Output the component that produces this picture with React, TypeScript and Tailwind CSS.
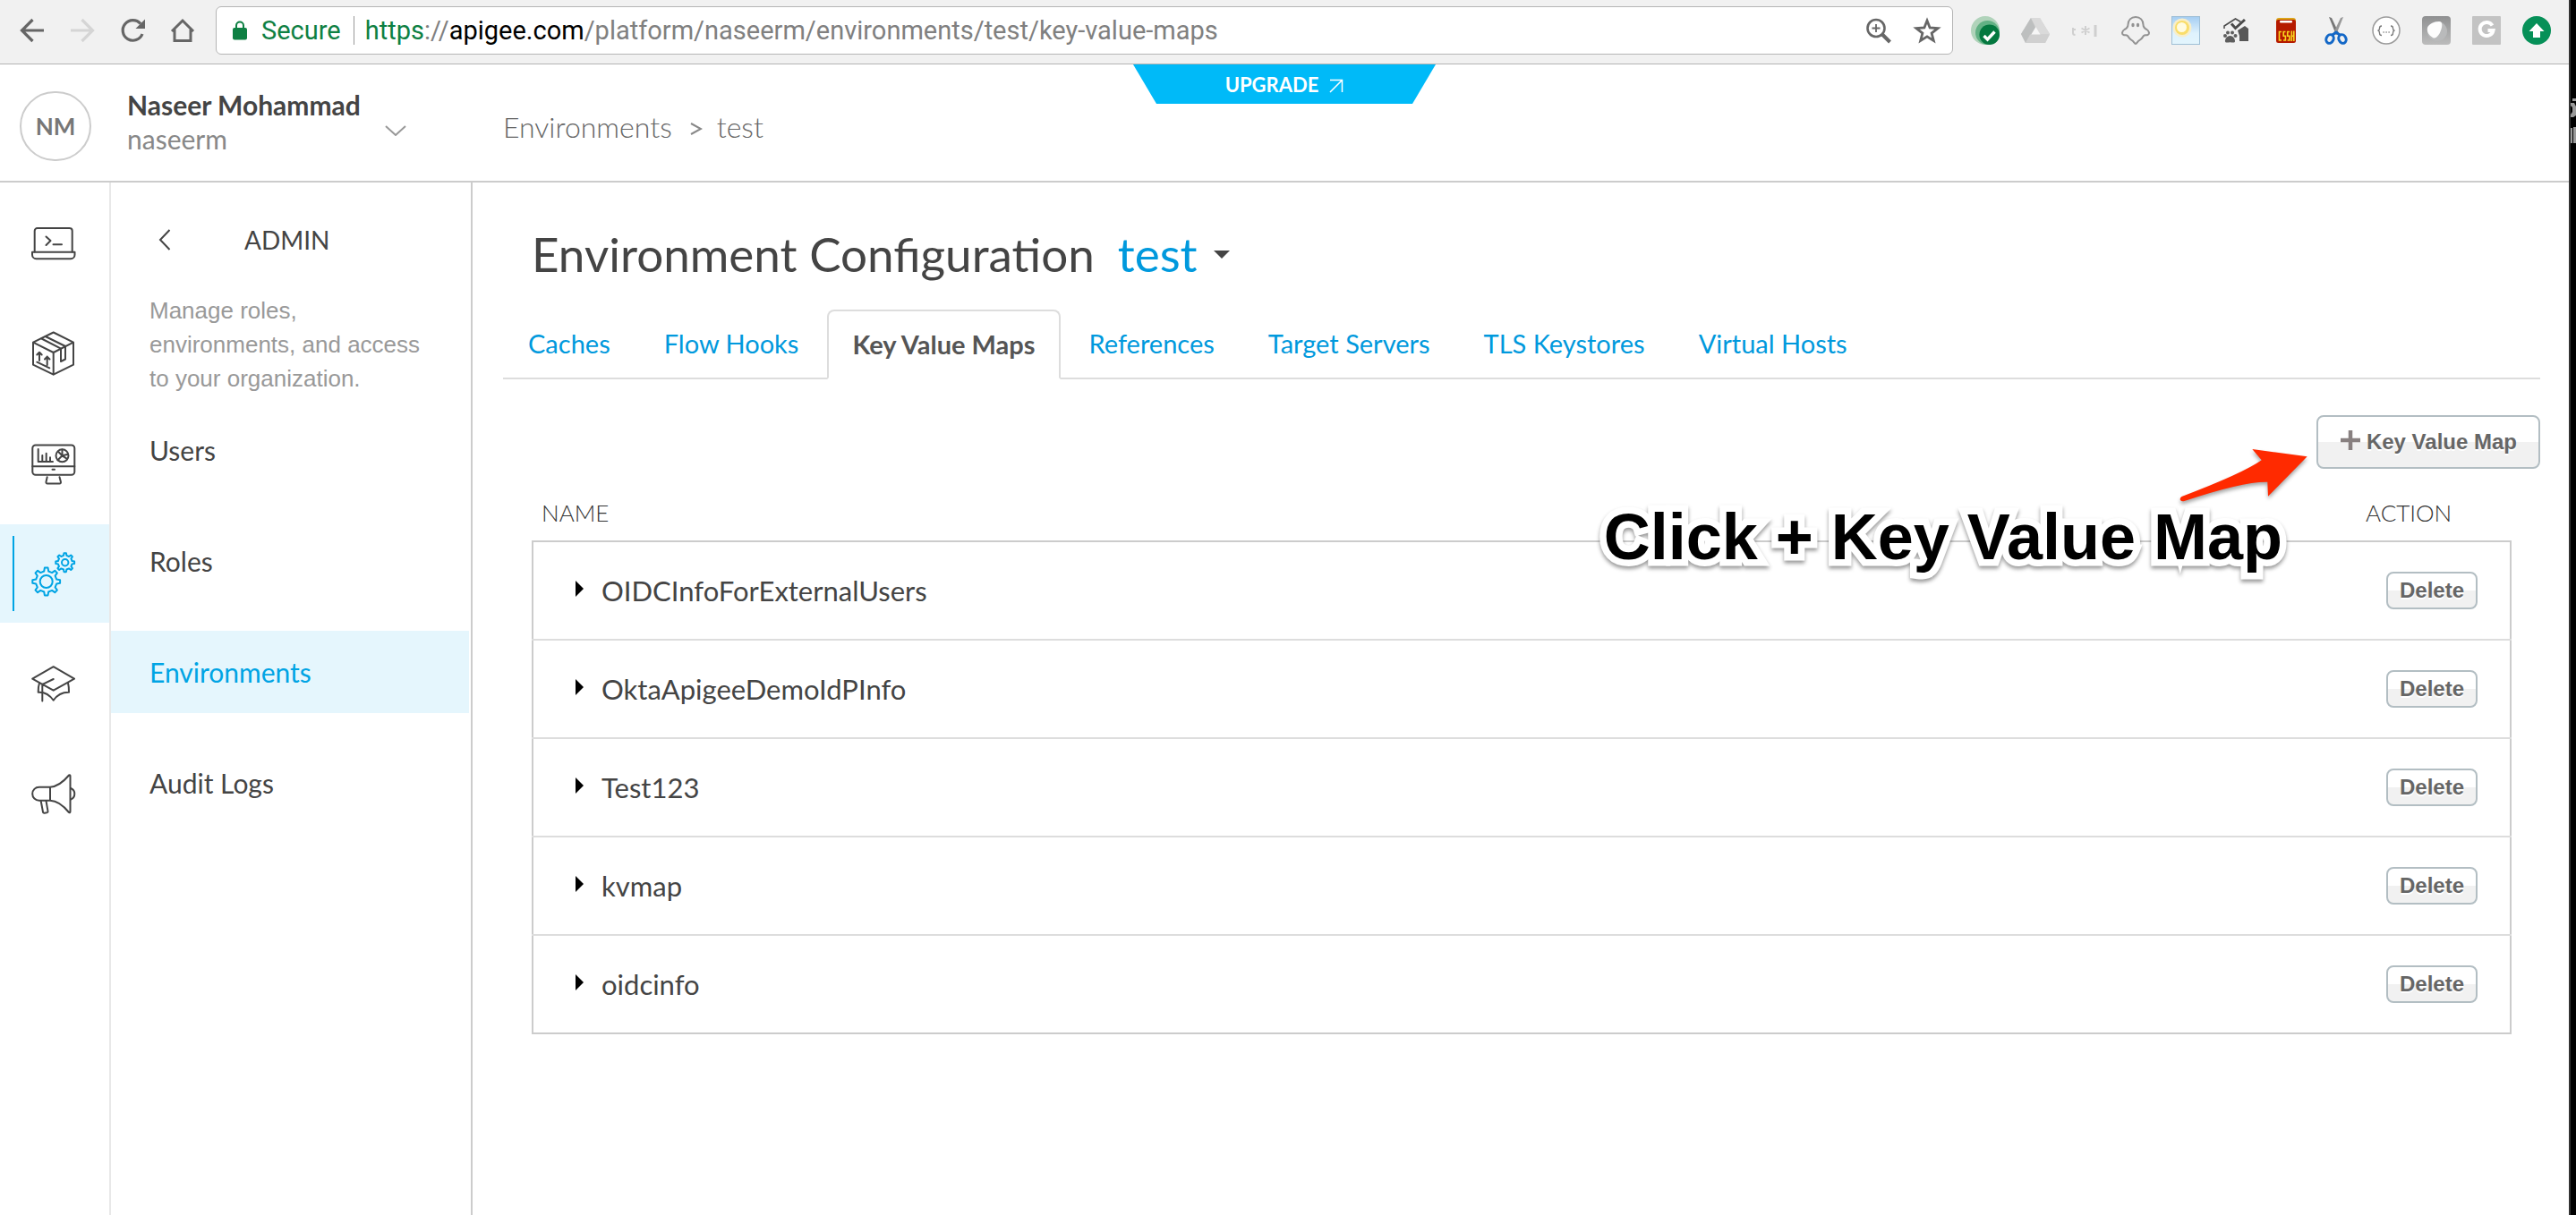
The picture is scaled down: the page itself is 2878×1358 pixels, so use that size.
import React from "react";

const LATO = "font-['Lato','Liberation_Sans',sans-serif]";
const ARIAL = "font-['Liberation_Sans',Arial,sans-serif]";

function gear(cx: number, cy: number, outer: number, root: number, teeth: number) {
  const pts: string[] = [];
  const step = (Math.PI * 2) / teeth;
  for (let i = 0; i < teeth; i++) {
    const a = i * step - Math.PI / 2;
    const corners: [number, number][] = [
      [a - step * 0.27, root],
      [a - step * 0.15, outer],
      [a + step * 0.15, outer],
      [a + step * 0.27, root],
    ];
    corners.forEach(([t, r]) =>
      pts.push(`${(cx + r * Math.cos(t)).toFixed(2)} ${(cy + r * Math.sin(t)).toFixed(2)}`),
    );
  }
  return `M${pts.join("L")}Z`;
}

function RailIcon({ children }: { children: React.ReactNode }) {
  return (
    <svg
      viewBox="0 0 52 52"
      className="size-[52px]"
      fill="none"
      stroke="currentColor"
      strokeWidth="2"
      strokeLinecap="round"
      strokeLinejoin="round"
      aria-hidden="true"
    >
      {children}
    </svg>
  );
}

const railItems = [
  {
    label: "Develop",
    icon: (
      <>
        <path d="M3.7 35.5V12a3 3 0 0 1 3-3h36a3 3 0 0 1 3 3v23.500" />
        <path d="M1 35.700h47.500v3a4.500 4.500 0 0 1-4.500 4.500H5.500A4.500 4.500 0 0 1 1 38.700Z" />
        <path d="m16.500 18.500 5 4.500-5 5M24.500 27.300H34" />
      </>
    ),
  },
  {
    label: "Publish",
    icon: (
      <>
        <path d="M24.700 2.500 47 13.700v25L24.700 49.700 2 38.700v-25ZM2 13.700 24.700 25 47 13.700M24.700 25v24.700" />
        <path d="M15.700 7 38 18v14.500L33 35V20.700L11.500 9.500" />
        <path d="M9 25v9M6.300 27.500 9 24.700l2.700 2.800M17.700 29.500V39M15 32.500l2.700-2.800 2.800 2.800M6.300 35.700l14 6.600" />
      </>
    ),
  },
  {
    label: "Analyze",
    icon: (
      <>
        <rect x="1.300" y="5.500" width="47" height="33.300" rx="3.500" />
        <path d="M1.300 29.200h47M23.500 32.800h2.500M17.700 41.300 16.500 46.500q-.3 2 1.500 2H31.500q1.800 0 1.400-2L31.500 41.300" />
        <path d="M7.700 10v14H24M12.300 17v6.500M16.700 14.700v8.800M21 19.300v4.200" />
        <circle cx="34.500" cy="17.300" r="7" />
        <path d="M34.500 10.500v6.800l6.500-1.500M34.500 17.300l-5 5M34.500 17.300l5.500 3.500M34.500 17.300l-4.500-4.500" />
      </>
    ),
  },
  {
    label: "Admin",
    active: true,
    icon: (
      <>
        <path d={gear(16.7, 35, 15.5, 11.8, 8)} />
        <circle cx="16.700" cy="35" r="7" />
        <path d={gear(37.7, 13.7, 10.5, 8, 8)} />
        <circle cx="37.700" cy="13.700" r="3.700" />
      </>
    ),
  },
  {
    label: "Learn",
    icon: (
      <>
        <path d="M24.700 7.200 48 20.700 24.700 33.700 1.200 20.700ZM24.700 21 12.300 27v18.500" />
        <path d="M9 25.500q-1.500 4.500-1.300 10.200Q18 35 24.700 44.700 31 35.500 42 35.700q.2-5.700-1-10.200" />
      </>
    ),
  },
  {
    label: "Announcements",
    icon: (
      <>
        <path d="M21 18.700H8.700a7.500 7.500 0 0 0 0 15H21ZM21 18.700Q31.500 18 42 5.500q1.500-.8 1.500 1V46q0 2-1.500 1Q31.500 34 21 33.700" />
        <path d="M44 20q4.300 1.700 4.300 6.300T44 32.700M10.700 34.200l2.300 12.300q.3 1.500 1.700 1.200l2.600-.4q1.500-.3 1.200-1.600L16.500 34.200" />
      </>
    ),
  },
];

const navItems = ["Users", "Roles", "Environments", "Audit Logs"];
const tabs = [
  "Caches",
  "Flow Hooks",
  "Key Value Maps",
  "References",
  "Target Servers",
  "TLS Keystores",
  "Virtual Hosts",
];
const maps = ["OIDCInfoForExternalUsers", "OktaApigeeDemoIdPInfo", "Test123", "kvmap", "oidcinfo"];

const extensions: { label: string; icon: React.ReactNode }[] = [
  {
    label: "Status check",
    icon: (
      <>
        <circle cx="16" cy="16" r="16" fill="#b0d3ba" />
        <circle cx="18.500" cy="18.500" r="13.500" fill="#62b184" />
        <circle cx="20.700" cy="20.700" r="11.300" fill="#04783f" />
        <path d="m14.500 22 4 4 8-8.500" fill="none" stroke="#fff" strokeWidth="3.400" />
      </>
    ),
  },
  {
    label: "Drive",
    icon: (
      <>
        <path d="M11 2h10l11 18-5 10H5L0 20Z" fill="#d2d2d2" />
        <path d="M11 2 0 20l5 10 11-17Z" fill="#bdbfbf" />
        <path d="M10 20.500h22L27 30H5Z" fill="#d0d0d0" />
        <path d="M11 2h10l11 18H21Z" fill="#dadada" />
        <path d="m16.500 12 5 8.500h-10Z" fill="#f6f6f6" />
      </>
    ),
  },
  {
    label: "Pattern",
    icon: (
      <g fill="none" stroke="#cfcfcf" strokeWidth="2">
        <path d="M2 13v6q0 2 2.500 2M1 15h4M16 11v10M11.500 13.500l9 5M20.500 13.500l-9 5" />
        <path d="M27 10v13" strokeWidth="3" />
      </g>
    ),
  },
  {
    label: "Ghost",
    icon: (
      <>
        <path
          d="M16 1c-5 0-8.500 3.500-8.500 8.500 0 3-1 4-4 5.500-2.500 1.500-3.500 5-1 6 2 .8 3-.5 4.500 1 1.500 1.700 1.800 3.500 4.500 4.800C14 28 14.500 31 16 31s2-3 4.500-4.200c2.700-1.300 3-3.100 4.500-4.800 1.500-1.500 2.500-.2 4.500-1 2.500-1 1.500-4.500-1-6-3-1.500-4-2.500-4-5.500C24.500 4.500 21 1 16 1Z"
          fill="none"
          stroke="#939393"
          strokeWidth="2"
        />
        <ellipse cx="13" cy="10" rx="1.700" ry="2.300" fill="#939393" />
        <ellipse cx="18.500" cy="10" rx="1.700" ry="2.300" fill="#939393" />
      </>
    ),
  },
  {
    label: "Weather",
    icon: (
      <>
        <defs>
          <linearGradient id="sky" x1="0" y1="0" x2="0" y2="1">
            <stop offset="0" stopColor="#a4cdf2" />
            <stop offset="0.600" stopColor="#dff2fd" />
            <stop offset="1" stopColor="#e3f5fd" />
          </linearGradient>
        </defs>
        <rect x=".5" y=".5" width="31" height="31" fill="url(#sky)" stroke="#9fbfd6" />
        <circle cx="12" cy="13" r="10.500" fill="#f7eecb" />
        <circle cx="12" cy="13" r="8" fill="#f9dd6a" />
        <circle cx="11.500" cy="12.500" r="5.500" fill="#fffbe0" />
      </>
    ),
  },
  {
    label: "Pet home",
    icon: (
      <>
        <path d="M3 14v-3L15.500 3l6 3.500" fill="none" stroke="#4a4a4a" strokeWidth="1.500" />
        <path d="m11 8.500 4.500 5L26 4" fill="none" stroke="#4a4a4a" strokeWidth="3" />
        <path d="m18 16 8-5 4 3v14H20v-6Z" fill="#575757" />
        <path d="M9.500 22c4 0 6 4.500 5.500 6.500-1 2-3 .7-5.500.7S5 30.500 4 28.500C3.500 26.500 5.500 22 9.500 22Z" fill="#5e5e5e" />
        <g fill="#5e5e5e">
          <circle cx="4" cy="22" r="2" />
          <circle cx="7" cy="18.500" r="2" />
          <circle cx="12" cy="18.500" r="2" />
          <circle cx="15.500" cy="22" r="2" />
        </g>
      </>
    ),
  },
  {
    label: "CSSH",
    icon: (
      <>
        <rect x="5" y="2" width="22" height="8" rx="3" fill="#dba51a" />
        <rect x="5" y="4" width="22" height="26" rx="2.500" fill="#b51a00" />
        <rect x="9" y="5" width="14" height="2.500" rx="1" fill="#fff" />
        <g fill="none" stroke="#f7d51d" strokeWidth="1.600">
          <path d="M11 17.500H8.500v9.500H11M15.500 17.500H13.200v4.700h2.200V27H13M20 17.500h-2.300v4.700h2.200V27h-2.300M22.300 16.500V28M22.300 22.200h2.600M24.800 16.500V28" />
        </g>
      </>
    ),
  },
  {
    label: "Clipper",
    icon: (
      <>
        <path d="m8 1 3 1 8 17-3 2Z" fill="#777" />
        <path d="m24 1-3 1-8 17 3 2Z" fill="#999" />
        <g fill="none" stroke="#1468c7" strokeWidth="3">
          <ellipse cx="9" cy="25.500" rx="4" ry="5" transform="rotate(25 9 25.500)" />
          <ellipse cx="23" cy="25.500" rx="4" ry="5" transform="rotate(-25 23 25.500)" />
          <path d="m12 21 4-3 4 3" />
        </g>
      </>
    ),
  },
  {
    label: "JSON",
    icon: (
      <>
        <circle cx="16" cy="16" r="15" fill="#fff" stroke="#9b9b9b" strokeWidth="1.500" />
        <path
          d="M11 11q-2.500 0-2.500 2.500 0 2.500-2 2.700 2 .2 2 2.700Q8.500 21.500 11 21.500M21 11q2.500 0 2.500 2.500 0 2.500 2 2.700-2 .2-2 2.700Q23.500 21.500 21 21.500"
          fill="none"
          stroke="#777"
          strokeWidth="1.300"
        />
        <path d="M12.500 18h1.200M15.500 18h1.200M18.500 18h1.200" stroke="#777" strokeWidth="1.300" />
      </>
    ),
  },
  {
    label: "Bulb",
    icon: (
      <>
        <defs>
          <linearGradient id="plate" x1="0" y1="0" x2="0" y2="1">
            <stop offset="0" stopColor="#8f9091" />
            <stop offset="1" stopColor="#bcbcbc" />
          </linearGradient>
        </defs>
        <rect width="32" height="32" rx="4" fill="url(#plate)" />
        <circle cx="17" cy="17" r="11" fill="#b9babb" />
        <path d="M19 6c4 0 4 5 2 10-2 6-6 10-9 8-4-2.500-7-6-6-11 1-4 8-7 13-7Z" fill="#fdfdfd" />
      </>
    ),
  },
  {
    label: "G",
    icon: (
      <>
        <rect width="32" height="32" rx="1" fill="#c3c3c3" />
        <path d="M22.500 10.500a7.500 7.500 0 1 0 1 5.500H17.500" fill="none" stroke="#fff" strokeWidth="4" />
      </>
    ),
  },
  {
    label: "Update available",
    icon: (
      <>
        <circle cx="16" cy="16" r="16" fill="#069058" />
        <path d="m16 8 8.500 9H20v7h-8v-7H7.500Z" fill="#fff" />
      </>
    ),
  },
];

function BrowserBar() {
  const iconButton = "flex size-8 items-center justify-center text-[#666]";
  return (
    <div className="flex h-[72px] items-center border-b border-[#b3b3b3] bg-[#f1f1f1] pr-5 pb-1 pl-5">
      <div className="flex w-[221px] items-center gap-6">
        <button className={iconButton} aria-label="Back">
          <svg viewBox="0 0 32 32" className="size-8" fill="none" stroke="currentColor" strokeWidth="3.200">
            <path d="M29 16H5M16.500 4 4.500 16l12 12" />
          </svg>
        </button>
        <button className={iconButton} aria-label="Forward" disabled>
          <svg viewBox="0 0 32 32" className="size-8" fill="none" stroke="#d5d5d5" strokeWidth="3.200">
            <path d="M3 16h24M15.500 4l12 12-12 12" />
          </svg>
        </button>
        <button className={iconButton} aria-label="Reload">
          <svg viewBox="0 0 32 32" className="size-8" fill="none" stroke="currentColor" strokeWidth="3.200">
            <path d="M25 8.500A11.300 11.300 0 1 0 27 20" />
            <path d="M30 3.500V14H19.500Z" fill="currentColor" stroke="none" />
          </svg>
        </button>
        <button className={iconButton} aria-label="Home">
          <svg viewBox="0 0 32 32" className="size-8" fill="none" stroke="currentColor" strokeWidth="3">
            <path d="M4 17 16 5l12 12M7 15v12.500h18V15" />
          </svg>
        </button>
      </div>
      <div className="flex h-[54px] flex-1 items-center rounded-md border border-[#b5b5b5] bg-white pr-3 pl-[18px] font-['Roboto','Liberation_Sans',sans-serif] text-[29px] leading-8">
        <svg viewBox="0 0 16 22" className="mr-4 h-[22px] w-4" aria-hidden="true">
          <rect y="8" width="16" height="13.500" rx="2" fill="#0e8043" />
          <path d="M4 9V5.500a4 4 0 0 1 8 0V9" fill="none" stroke="#0e8043" strokeWidth="2" />
        </svg>
        <span className="text-[#0e8043]">Secure</span>
        <span className="mr-3 ml-3.5 h-8 w-px bg-[#999]" />
        <div role="textbox" aria-label="Address" className="flex-1 whitespace-nowrap text-[#808080]">
          <span className="text-[#0e8043]">https</span>://<span className="text-black">apigee.com</span>
          /platform/naseerm/environments/test/key-value-maps
        </div>
        <button aria-label="Zoom" className="mr-[22px] text-[#666]">
          <svg viewBox="0 0 32 32" className="size-8" fill="none" stroke="currentColor">
            <circle cx="13" cy="13.500" r="9.500" strokeWidth="2.600" />
            <path d="m20 20.500 8.500 8.500" strokeWidth="4" />
            <path d="M13 9v9M8.500 13.500h9" strokeWidth="1.800" />
          </svg>
        </button>
        <button aria-label="Bookmark" className="text-[#666]">
          <svg viewBox="0 0 32 32" className="size-8" fill="none" stroke="currentColor" strokeWidth="2.800">
            <path d="m16 5 3.100 8 8.900.6-6.900 5.500 2.200 8.400-7.300-4.600-7.300 4.600 2.200-8.400L4 13.600l8.900-.6Z" />
          </svg>
        </button>
      </div>
      <div className="ml-5 flex gap-6">
        {extensions.map((e) => (
          <button key={e.label} aria-label={e.label} className="size-8">
            <svg viewBox="0 0 32 32" className="size-8">
              {e.icon}
            </svg>
          </button>
        ))}
      </div>
    </div>
  );
}

function Header() {
  return (
    <header className="relative flex h-[132px] items-start border-b-2 border-[#ccc] pl-[22px]">
      <div className="flex w-[540px] items-start">
        <div className="mt-[30px] flex h-[78px] w-20 items-center justify-center rounded-full border-2 border-[#ccc] text-[26px] font-bold text-[#777]">
          NM
        </div>
        <button className="mt-[26px] ml-10 flex text-left" aria-label="Account menu">
          <span className="w-[288px]">
            <span className="block text-[30px] leading-[38px] font-bold text-[#444]">Naseer Mohammad</span>
            <span className="block text-[30px] leading-[38px] text-[#888]">naseerm</span>
          </span>
          <svg viewBox="0 0 24 12" className="mt-[42px] h-3 w-6" fill="none" stroke="#999" strokeWidth="2">
            <path d="m1 1 11 10L23 1" />
          </svg>
        </button>
      </div>
      <nav aria-label="Breadcrumb" className="mt-[50px] flex items-center text-[32px] leading-10 font-light text-[#666]">
        <a href="#environments">Environments</a>
        <svg viewBox="0 0 14 14" className="mr-4 ml-5 mt-1 size-3.5" fill="none" stroke="#888" strokeWidth="2">
          <path d="m1 1 11 6-11 6" />
        </svg>
        <span>test</span>
      </nav>
      <a
        href="#upgrade"
        className="absolute top-0 left-1/2 flex h-11 w-[338px] -translate-x-1/2 items-center justify-center bg-[#00baf8] text-[22px] font-bold text-white [clip-path:polygon(0_0,100%_0,312px_100%,26px_100%)]"
      >
        UPGRADE
        <svg viewBox="0 0 16 16" className="mt-1 ml-3 size-4" fill="none" stroke="currentColor" strokeWidth="1.500">
          <path d="M1 1.500h13.500V15M14.500 1.500 1 15" />
        </svg>
      </a>
    </header>
  );
}

function Rail() {
  return (
    <nav aria-label="Sections" className="w-[124px] border-r-2 border-[#e8e8e8] pt-[13px]">
      <ul className="flex flex-col gap-[13px]">
        {railItems.map((item) => (
          <li key={item.label}>
            <a
              href={`#${item.label.toLowerCase()}`}
              aria-label={item.label}
              className={
                item.active
                  ? "relative flex h-[110px] items-center justify-center bg-[#e5f6fd] text-[#00a4e4]"
                  : "flex h-[110px] items-center justify-center text-[#444]"
              }
            >
              {item.active && <span className="absolute inset-y-[13px] left-3.5 w-0.5 bg-[#00a4e4]" />}
              <RailIcon>{item.icon}</RailIcon>
            </a>
          </li>
        ))}
      </ul>
    </nav>
  );
}

function AdminPanel() {
  return (
    <aside className="w-[404px] border-r-2 border-[#ccc] pr-0.5">
      <div className="mt-11 flex h-10 items-center pl-[53px]">
        <button aria-label="Back to menu" className="w-[96px]">
          <svg viewBox="0 0 14 24" className="h-6 w-3.5" fill="none" stroke="#444" strokeWidth="2">
            <path d="M12.500 1 2 12l10.500 11" />
          </svg>
        </button>
        <h2 className="text-[28px] text-[#444]">ADMIN</h2>
      </div>
      <p className={`mt-10 pl-[43px] text-[26px] leading-[38px] text-[#999] ${ARIAL}`}>
        Manage roles,
        <br />
        environments, and access
        <br />
        to your organization.
      </p>
      <ul className="mt-[15px] flex flex-col gap-8">
        {navItems.map((n) => (
          <li key={n}>
            <a
              href={`#${n.toLowerCase().replace(" ", "-")}`}
              className={
                n === "Environments"
                  ? "flex h-[92px] items-center bg-[#e5f6fd] pl-[43px] text-[30px] text-[#00a4e4]"
                  : "flex h-[92px] items-center pl-[43px] text-[30px] text-[#444]"
              }
            >
              {n}
            </a>
          </li>
        ))}
      </ul>
    </aside>
  );
}

const glossy = `rounded-lg border-2 border-[#b3bec3] bg-[linear-gradient(#fff_50%,#f1f1f1_50%)] text-2xl leading-7 font-bold text-[#666] [text-shadow:0_2px_0_#fff]`;

function Main() {
  return (
    <main className="relative flex-1 pr-8 pl-[34px]">
      <div className="flex h-[142px] items-center pt-[18px] pl-8">
        <h1 className="text-[53px] leading-[64px] text-[#444]">Environment Configuration</h1>
        <div className="relative ml-[26px] flex items-center">
          <select
            aria-label="Environment"
            className="appearance-none bg-transparent pr-9 text-[53px] leading-[64px] text-[#0099dd]"
          >
            <option>test</option>
          </select>
          <svg viewBox="0 0 18 9" className="pointer-events-none absolute right-0 h-[9px] w-[18px]" fill="#444" aria-hidden="true">
            <path d="M0 0h18L9 9Z" />
          </svg>
        </div>
      </div>

      <nav aria-label="Environment settings" className="flex gap-1 border-b-2 border-[#ddd]">
        {tabs.map((t) => (
          <a
            key={t}
            href={`#${t.toLowerCase().replace(" ", "-")}`}
            className={
              t === "Key Value Maps"
                ? "-mb-0.5 flex h-[78px] items-center rounded-t-lg border-2 border-[#ddd] border-b-white bg-white px-[26px] text-[29px] font-bold text-[#555]"
                : "flex h-[76px] items-center px-7 text-[29px] text-[#0099dd]"
            }
          >
            {t}
          </a>
        ))}
      </nav>

      <div className="mt-10 flex justify-end">
        <button className={`flex h-[60px] items-center gap-1.5 px-6 ${glossy} ${ARIAL}`}>
          <svg viewBox="0 0 24 24" className="-mt-1 size-6" stroke="#888080" strokeWidth="4.500" aria-hidden="true">
            <path d="M12 1v22M1 12h22" />
          </svg>
          Key Value Map
        </button>
      </div>

      <div className="pr-8 pl-8">
        <table className="w-full border-collapse">
          <thead>
            <tr className="h-[81px] text-left text-[26px] leading-8 text-[#333]">
              <th scope="col" className="pt-[18px] pl-2.5 font-light">NAME</th>
              <th scope="col" className="w-[172px] pt-[18px] pl-2.5 font-light">ACTION</th>
            </tr>
          </thead>
          <tbody className="border-2 border-[#ccc]">
            {maps.map((m) => (
              <tr key={m} className="h-[110px] border-t-2 border-[#ddd] first:border-[#ccc]">
                <td className="pl-[47px]">
                  <button className="flex items-center text-[31px] leading-10 text-[#444]" aria-expanded="false">
                    <svg viewBox="0 0 9 18" className="-mt-1 mr-5 h-[18px] w-[9px]" aria-hidden="true">
                      <path d="M0 0v18l9-9Z" />
                    </svg>
                    {m}
                  </button>
                </td>
                <td className="pr-9 text-right">
                  <button className={`h-[42px] w-[102px] ${glossy} ${ARIAL}`}>Delete</button>
                </td>
              </tr>
            ))}
          </tbody>
        </table>
      </div>

      <div
        className={`pointer-events-none absolute top-[352px] right-[320px] text-[72px] leading-[88px] font-bold whitespace-nowrap text-black [paint-order:stroke_fill] [-webkit-text-stroke:15px_white] drop-shadow-[0_3px_2px_rgba(0,0,0,0.4)] ${ARIAL}`}
      >
        Click + Key Value Map
      </div>
      <svg
        viewBox="0 0 146 62"
        className="pointer-events-none absolute top-[296px] right-[290px] h-[62px] w-[146px] overflow-visible drop-shadow-[0_3px_2px_rgba(0,0,0,0.35)]"
        aria-hidden="true"
      >
        <path d="M143.700 10.300 82.300 2l10.400 12.300Q72 29 3.500 55q-2.500 1.500-1.500 4 1.500 2 4.500 1Q72 38 99.300 38.700L100 54.700Z" fill="#ff2a00" />
      </svg>
    </main>
  );
}

export default function App() {
  return (
    <div className={`flex min-h-screen bg-white ${LATO}`}>
      <div className="flex min-w-0 flex-1 flex-col">
        <BrowserBar />
        <Header />
        <div className="flex flex-1">
          <Rail />
          <AdminPanel />
          <Main />
        </div>
      </div>
      <div className="w-2 border-l-2 border-[#333] bg-black pt-[110px]" aria-hidden="true">
        <svg viewBox="0 0 6 50" className="h-[50px] w-1.5" fill="#999">
          <path d="M2 0h4v3H2ZM0 5h4l2 4v10l-3 2H0v-3l2-3V10L0 8ZM0 33h2v17H0ZM3 32h3v18H3Z" />
        </svg>
      </div>
    </div>
  );
}
